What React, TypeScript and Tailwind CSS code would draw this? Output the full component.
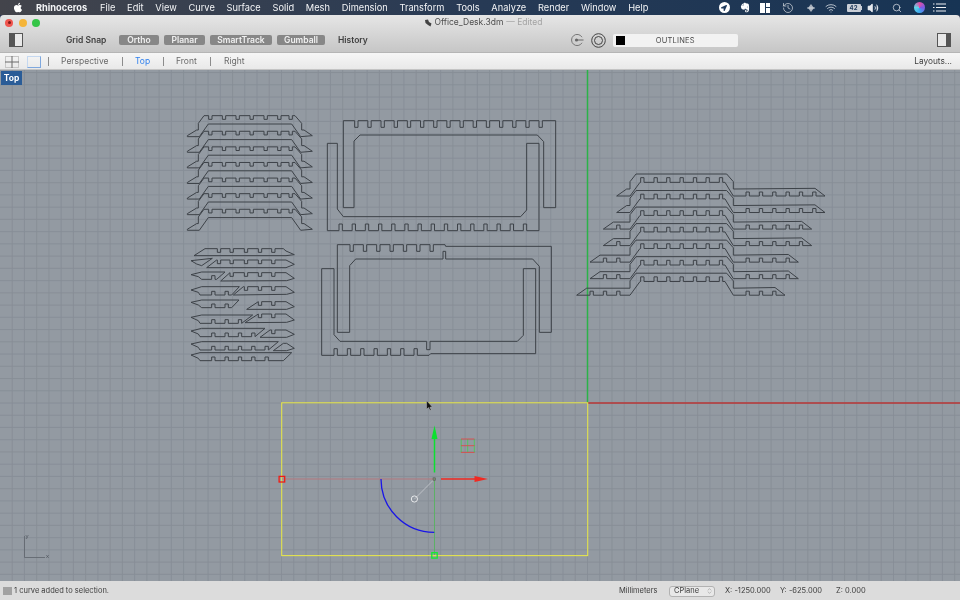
import React from "react";
import { FaApple, FaEvernote, FaLocationArrow } from "react-icons/fa";
import { Wifi, Volume2, Search, History, ChevronsUpDown } from "lucide-react";

type P = [number, number];
const pts = (list: P[], ox: number, oy: number) =>
  list.map(([x, y]) => `${(ox + x / 3).toFixed(2)},${(oy + y / 3).toFixed(2)}`).join(" ");

const edge = (xs: number[], y: number, w: number, d: number): P[] =>
  xs.flatMap((x) => [[x, y], [x, y + d], [x + w, y + d], [x + w, y]] as P[]);

const range = (start: number, step: number, n: number) =>
  Array.from({ length: n }, (_, i) => start + step * i);

const shift = (list: P[], dy: number): P[] => list.map(([x, y]) => [x, y + dy]);

// stack of ribs, upper left
const ribA: P[] = [
  [22, 92], [50, 75], [55, 75], [55, 55], [72, 32],
  ...edge([86, 127, 168, 210, 252, 293, 327], 32, 10, 11),
  [345, 32], [365, 55], [365, 75], [372, 75], [397, 92], [362, 95], [335, 57], [85, 57], [58, 95], [22, 95],
];

// stack of split ribs, lower left
const top = (a: number, b: number, y: number, xs: number[]) => edge(xs.filter((x) => x >= a && x <= b), y, 10, 11);
const bot = (a: number, b: number, y: number) =>
  edge([265, 225, 185, 145, 105].filter((x) => x <= b && x >= a), y, -10, -11);
const notchTop = [112, 150, 193, 235, 275];
const ribsB: P[][] = [
  [[42, 47], [75, 26], ...top(75, 300, 26, notchTop), [310, 26], [318, 33], [343, 44], [318, 47]],
  [[33, 62], [97, 55], [65, 77], [50, 72]],
  [[80, 83], [110, 60], ...top(110, 300, 60, notchTop), [318, 60], [343, 73], [318, 83]],
  [[33, 104], [65, 96], [135, 96], [110, 118], ...bot(100, 110, 118), [65, 118], [55, 110]],
  [[122, 123], [150, 98], ...top(150, 300, 98, notchTop), [318, 98], [343, 115], [320, 122]],
  [[33, 150], [65, 140], [178, 140], [155, 165], ...bot(100, 150, 165), [60, 165], [55, 157]],
  [[160, 165], [190, 140], ...top(190, 300, 140, notchTop), [318, 140], [343, 157], [320, 163]],
  [[33, 187], [65, 180], [177, 180], [155, 203], ...bot(100, 150, 203), [65, 203], [55, 195]],
  [[200, 208], [235, 185], ...top(235, 300, 185, notchTop), [318, 185], [343, 200], [320, 208]],
  [[33, 232], [65, 225], [218, 225], [185, 250], ...bot(100, 185, 250), [60, 250], [55, 242]],
  [[195, 248], [235, 222], ...top(235, 300, 222, notchTop), [318, 222], [343, 240], [320, 247]],
  [[33, 273], [65, 265], [255, 265], [225, 290], ...bot(100, 225, 290), [60, 290], [55, 282]],
  [[240, 292], [270, 270], ...top(270, 300, 270, notchTop), [318, 270], [343, 283], [320, 292]],
  [[33, 312], [65, 305], [295, 305], [265, 330], ...bot(100, 265, 330), [60, 330], [55, 322]],
  [[280, 332], [310, 310], [320, 310], [343, 325], [320, 332]],
  [[33, 345], [60, 338], [335, 338], [310, 362], ...bot(100, 265, 362), [60, 362], [55, 355]],
];

// long frames
const frameA1: P[] = [
  [70, 32], ...edge(range(104, 39.5, 15), 32, 10, 20), [707, 32], [707, 293], [671, 293], [671, 95], [652, 75],
  [120, 75], [102, 93], [102, 293], [70, 293],
];
const frameA2: P[] = [
  [22, 100], [52, 100], [52, 297], [70, 320], [602, 320], [620, 300], [620, 100], [657, 100], [657, 362],
  ...edge(range(620, -39.5, 15), 362, -10, -20), [22, 362],
];
const frameB1: P[] = [
  [67, 20], ...edge(range(105, 40, 7), 20, 10, 20), [390, 20], [392, 25], [709, 25], [709, 283], [673, 283],
  [673, 85], [653, 63], [392, 63], [392, 40], [384, 40], [384, 63], [122, 63], [104, 83], [104, 283], [67, 283],
];
const frameB2: P[] = [
  [20, 92], [57, 92], [57, 290], [75, 310], [335, 310], [335, 335], [345, 335], [345, 310], [607, 310], [625, 292],
  [625, 92], [662, 92], [662, 347], [347, 347], [342, 352], ...edge(range(307, -40, 7), 352, -10, -20), [20, 352],
];

// stack on the right of the Y axis
const ribC = (left: number, right: number): P[] => {
  const rightNotches = [738, 698, 658, 618, 578, 538].filter((x) => x < right - 15);
  const leftNotches = [150, 110, 70].filter((x) => x >= left + 40);
  return [
    [left, 93], [left + 30, 72], [180, 72], [180, 50], [198, 27], [470, 27], [490, 50], [490, 72],
    [right - 30, 70], [right, 93],
    ...edge(rightNotches, 93, -10, -12),
    [490, 93], [465, 52],
    ...edge([458, 418, 380, 340, 300, 262, 222], 52, -10, -14),
    [210, 52], [180, 93],
    ...edge(leftNotches, 93, -10, -12),
  ];
};
const ribCRows: { l: number; r: number }[] = [
  { l: 140, r: 765 }, { l: 140, r: 765 }, { l: 100, r: 725 }, { l: 100, r: 725 },
  { l: 60, r: 685 }, { l: 60, r: 685 }, { l: 20, r: 645 },
];

const GRID = 12.24;
const vLines = Array.from({ length: 80 }, (_, i) => 587.5 + (i - 48) * GRID).filter((x) => x > 0 && x < 960);
const hLines = Array.from({ length: 50 }, (_, i) => 403 + (i - 28) * GRID).filter((y) => y > 70 && y < 581);

function Canvas() {
  const ink = "#3d4248";
  const shapes: { p: P[]; ox: number; oy: number }[] = [
    ...range(0, 46.8, 7).map((dy) => ({ p: shift(ribA, dy), ox: 180, oy: 105 })),
    ...ribsB.map((p) => ({ p, ox: 180, oy: 240 })),
    { p: frameA1, ox: 320, oy: 110 },
    { p: frameA2, ox: 320, oy: 110 },
    { p: frameB1, ox: 315, oy: 238 },
    { p: frameB2, ox: 315, oy: 238 },
    ...ribCRows.map((r, i) => ({ p: shift(ribC(r.l, r.r), i * 49.6), ox: 570, oy: 165 })),
  ];
  return (
    <svg width="960" height="511" viewBox="0 70 960 511" className="block w-full h-full">
      <rect x="0" y="70" width="960" height="511" fill="#939aa2" />
      {vLines.map((x, i) => (
        <line key={i} x1={x} y1="70" x2={x} y2="581" stroke="#878d96" strokeWidth="0.9" />
      ))}
      {hLines.map((y, i) => (
        <line key={i} x1="0" y1={y} x2="960" y2={y} stroke="#878d96" strokeWidth="0.9" />
      ))}
      <line x1="587.5" y1="70" x2="587.5" y2="403" stroke="#2bb348" strokeWidth="1.5" />
      <line x1="587.5" y1="403" x2="960" y2="403" stroke="#b83636" strokeWidth="1.3" />
      {shapes.map((s, i) => (
        <polygon key={i} points={pts(s.p, s.ox, s.oy)} fill="none" stroke={ink} strokeWidth="1" strokeLinejoin="miter" />
      ))}
      {/* selection */}
      <rect x="281.7" y="402.8" width="306" height="152.8" fill="none" stroke="#e4e44e" strokeWidth="1.1" />
      <line x1="282" y1="479" x2="434.3" y2="479" stroke="#b5787e" strokeWidth="1" />
      <line x1="434.5" y1="479" x2="434.5" y2="555" stroke="#5cb066" strokeWidth="1" />
      <path d="M381 479 A53.3 53.3 0 0 0 434.3 532.3" fill="none" stroke="#1a16e6" strokeWidth="1.3" />
      <line x1="414.5" y1="499" x2="434" y2="479.5" stroke="#c6c9ce" strokeWidth="0.8" />
      <circle cx="414.4" cy="499" r="3.1" fill="none" stroke="#e6e8ea" strokeWidth="1" />
      <rect x="433" y="477.8" width="2.6" height="2.6" fill="#7d8672" stroke="#555" strokeWidth="0.5" />
      {/* gumball */}
      <line x1="434.5" y1="472.5" x2="434.5" y2="436" stroke="#0ce030" strokeWidth="1.5" />
      <polygon points="434.5,425.5 437.5,439 431.5,439" fill="#0ce030" />
      <line x1="441" y1="479" x2="476" y2="479" stroke="#f02a22" strokeWidth="1.5" />
      <polygon points="488,479 474.5,476 474.5,482" fill="#f02a22" />
      <rect x="279.1" y="476.4" width="5.6" height="5.6" fill="none" stroke="#f01c14" strokeWidth="1.3" />
      <rect x="431.8" y="552.7" width="5.4" height="5.4" fill="none" stroke="#12ec30" strokeWidth="1.3" />
      {/* scale widget */}
      <g strokeWidth="0.8" fill="none">
        <path d="M461.2 439V452.5M474.3 439V452.5M467.7 439V452.5" stroke="#3fd04d" />
        <path d="M461 439H474.5M461 445.7H474.5M461 452.4H474.5" stroke="#e6403c" />
      </g>
      {/* cursor */}
      <path d="M426.6 400.6V409.3L428.6 407.6L430 410.6L431.2 410L429.9 407.2L432.3 407Z" fill="#111" stroke="#b9bbbf" strokeWidth="0.5" />
      {/* world axes icon */}
      <path d="M24.5 536V557.5H45" fill="none" stroke="#5d636b" strokeWidth="0.8" />
      <text x="25.5" y="538" fontSize="6" fill="#4d535b" fontFamily="'Liberation Sans', sans-serif">y</text>
      <text x="46" y="558" fontSize="6" fill="#4d535b" fontFamily="'Liberation Sans', sans-serif">x</text>
    </svg>
  );
}

const menus = ["File", "Edit", "View", "Curve", "Surface", "Solid", "Mesh", "Dimension", "Transform", "Tools", "Analyze", "Render", "Window", "Help"];

function MenuBar() {
  return (
    <div className="flex items-center h-[15px] shrink-0 bg-gradient-to-r from-[#43444b] via-[#273a55] to-[#173454] text-[#f4f5f7] text-[9.25px] leading-none">
      <FaApple className="ml-[13px] w-[10px] h-[11px] text-white" />
      <span className="ml-[13px] font-bold w-[64px]">Rhinoceros</span>
      <div className="flex items-center gap-[11.75px]">
        {menus.map((m) => (
          <span key={m}>{m}</span>
        ))}
      </div>
      <div className="ml-auto mr-[6px] flex items-center text-white">
        <span className="w-[20px] flex justify-center">
          <span className="w-[11px] h-[11px] rounded-full bg-white flex items-center justify-center">
            <FaLocationArrow className="w-[6px] h-[6px] text-[#1f3a5c]" />
          </span>
        </span>
        <span className="w-[22px] flex justify-center"><FaEvernote className="w-[10px] h-[11px]" /></span>
        <span className="w-[18px] flex justify-center">
          <span className="grid grid-cols-2 gap-[1px] w-[10px] h-[10px]">
            <span className="bg-white row-span-2" />
            <span className="bg-white" />
            <span className="bg-white" />
          </span>
        </span>
        <span className="w-[28px] flex justify-center"><History className="w-[12px] h-[12px] text-[#d9dde3]" strokeWidth={1.4} /></span>
        <span className="w-[18px] flex justify-center">
          <svg width="8" height="10" viewBox="0 0 8 10">
            <path d="M4 1L7 5L4 9L1 5Z" fill="#aab2bd" />
            <path d="M0 5H8" stroke="#e0e3e8" strokeWidth=".8" />
          </svg>
        </span>
        <span className="w-[22px] flex justify-center"><Wifi className="w-[14px] h-[12px] text-[#e6e9ee]" strokeWidth={1.5} /></span>
        <span className="w-[24px] flex justify-center items-center">
          <span className="w-[14px] h-[8px] bg-[#c9ced6] rounded-[1px] text-[6px] leading-[8px] text-center text-[#1f3a5c] font-bold">42</span>
          <span className="w-[1px] h-[4px] bg-[#c9ced6]" />
        </span>
        <span className="w-[14px] flex justify-center"><Volume2 className="w-[12px] h-[12px] text-[#e6e9ee] shrink-0" fill="currentColor" strokeWidth={1.3} /></span>
        <span className="w-[34px] flex justify-center"><Search className="w-[10px] h-[10px] text-[#e6e9ee]" strokeWidth={1.7} /></span>
        <span className="w-[10px] flex justify-center"><span className="w-[11px] h-[11px] shrink-0 rounded-full bg-[conic-gradient(#e24fa5,#7a5be6,#3ba8ef,#63d6e8,#e24fa5)]" /></span>
        <span className="w-[30px] flex justify-center">
          <svg width="13" height="9" viewBox="0 0 13 9">
            <path d="M0 1H1.5M0 4.5H1.5M0 8H1.5M3 1H13M3 4.5H13M3 8H13" stroke="#f0f2f5" strokeWidth="1.2" />
          </svg>
        </span>
      </div>
    </div>
  );
}

const Pill = ({ w, t }: { w: string; t: string }) => (
  <span className={`${w} h-[10px] rounded-[2px] bg-[#878787] text-[#f1f1f1] text-[8.5px] leading-[10px] font-semibold text-center`}>{t}</span>
);

function TitleBar() {
  return (
    <div className="h-[38px] shrink-0 bg-gradient-to-b from-[#e6e6e6] to-[#c6c6c6] border-b border-[#b5b5b5] rounded-t-[4px] flex flex-col">
      <div className="h-[15px] flex items-center shrink-0">
        <div className="flex items-center gap-[5.5px] ml-[5px]">
          <span className="w-[8px] h-[8px] rounded-full bg-[#f0564f] flex items-center justify-center">
            <span className="w-[3px] h-[3px] rounded-full bg-[#7f1a16]" />
          </span>
          <span className="w-[8px] h-[8px] rounded-full bg-[#f5b53a]" />
          <span className="w-[8px] h-[8px] rounded-full bg-[#35c548]" />
        </div>
        <div className="flex-1 flex items-center justify-center text-[8.5px] mr-[34px]">
          <svg width="8" height="8" viewBox="0 0 8 8" className="mr-[3px]">
            <path d="M1 1L4 .5L5 3L7.5 4.5L6.5 7.5L4 6L1.5 4Z" fill="#444" />
          </svg>
          <span className="text-[#4e4e4e]">Office_Desk.3dm</span>
          <span className="text-[#a3a3a3] ml-[3px]">— Edited</span>
        </div>
      </div>
      <div className="flex-1 flex items-center pb-[2px] text-[8.5px]">
        <svg width="14" height="14" viewBox="0 0 14 14" className="ml-[9px]">
          <rect x=".5" y=".5" width="13" height="13" fill="#e8e8e8" stroke="#555" />
          <rect x="1" y="1" width="5" height="12" fill="#555" />
        </svg>
        <span className="ml-[43px] w-[53px] font-semibold text-[#3f3f3f]">Grid Snap</span>
        <div className="flex items-center gap-[5px]">
          <Pill w="w-[40px]" t="Ortho" />
          <Pill w="w-[41px]" t="Planar" />
          <Pill w="w-[62px]" t="SmartTrack" />
          <Pill w="w-[48px]" t="Gumball" />
        </div>
        <span className="ml-[13px] font-semibold text-[#3f3f3f]">History</span>
        <svg width="14" height="14" viewBox="0 0 14 14" className="ml-[202px]">
          <path d="M12 4.2A5.6 5.6 0 1 0 12 9.8" fill="none" stroke="#777" strokeWidth="1" />
          <path d="M7 7H13.5" stroke="#666" strokeWidth="1" />
          <circle cx="6.5" cy="7" r="1.6" fill="#666" />
        </svg>
        <svg width="15" height="15" viewBox="0 0 15 15" className="ml-[7px]">
          <circle cx="7.5" cy="7.5" r="6.8" fill="none" stroke="#444" strokeWidth="1" />
          <circle cx="7.5" cy="7.5" r="4" fill="none" stroke="#444" strokeWidth="1" />
        </svg>
        <div className="ml-[7px] w-[125px] h-[13px] bg-[#f2f2f2] rounded-[2px] flex items-center pl-[3px]">
          <span className="w-[9px] h-[9px] bg-black shrink-0" />
          <span className="flex-1 text-center text-[7.5px] tracking-[0.2px] text-[#4a4a4a] pr-[12px] pt-[1px]">OUTLINES</span>
        </div>
        <svg width="14" height="14" viewBox="0 0 14 14" className="ml-auto mr-[9px]">
          <rect x=".5" y=".5" width="13" height="13" fill="#e8e8e8" stroke="#555" />
          <rect x="9" y="1" width="4" height="12" fill="#555" />
        </svg>
      </div>
    </div>
  );
}

const Sep = () => <span className="block w-px h-[9px] bg-[#8c8c8c]" />;

function TabBar() {
  return (
    <div className="h-[17px] shrink-0 bg-gradient-to-b from-[#f6f6f6] to-[#e9e9e9] border-b border-[#c4c4c4] flex items-center pt-[1px] text-[8.5px] text-[#6a6a6a]">
      <svg width="14" height="12" viewBox="0 0 14 12" className="ml-[5px]">
        <rect x=".5" y=".5" width="13" height="11" fill="none" stroke="#c6c6c6" />
        <path d="M7 0V12M0 6H14" stroke="#6a6a6a" strokeWidth="1" />
      </svg>
      <span className="ml-[8px] w-[14px] h-[12px] border border-[#c5d8f0] border-b-[#7fa8de] border-r-[#7fa8de]" />
      <span className="ml-[7px]"><Sep /></span>
      <span className="ml-[12px] w-[61px] block">Perspective</span>
      <Sep />
      <span className="ml-[12px] w-[28px] text-[#2f80ee] block">Top</span>
      <Sep />
      <span className="ml-[12px] w-[34px] block">Front</span>
      <Sep />
      <span className="ml-[13px]">Right</span>
      <span className="ml-auto mr-[8px] text-[#3f3f3f] text-[8.3px]">Layouts...</span>
    </div>
  );
}

function StatusBar() {
  return (
    <div className="h-[19px] shrink-0 bg-[#dcdcdc] flex items-center pt-[1px] text-[7.5px] text-[#3c3c3c]">
      <span className="ml-[3px] w-[9px] h-[8px] bg-[#a2a2a2]" />
      <span className="ml-[2px]">1 curve added to selection.</span>
      <span className="ml-auto w-[50px]">Millimeters</span>
      <span className="w-[46px] h-[11px] border border-[#b2b2b2] rounded-[3px] bg-[#e8e8e8] flex items-center pl-[4px] leading-none">
        CPlane
        <ChevronsUpDown className="ml-auto mr-[1px] w-[7px] h-[8px] text-[#777]" strokeWidth={1.5} />
      </span>
      <span className="ml-[10px] w-[55px]">X: -1250.000</span>
      <span className="w-[56px]">Y: -625.000</span>
      <span className="w-[124px]">Z: 0.000</span>
    </div>
  );
}

export default function App() {
  return (
    <div className="w-[960px] h-[600px] overflow-hidden flex flex-col bg-[#2a3550] blur-[0.35px] font-['Inter','Liberation_Sans',sans-serif]">
      <MenuBar />
      <TitleBar />
      <TabBar />
      <div className="relative flex-1 min-h-0">
        <Canvas />
        <span className="absolute left-[1px] top-[1px] w-[21px] h-[14px] bg-[#2a5c97] text-white text-[8.5px] leading-[14px] font-bold text-center">Top</span>
      </div>
      <StatusBar />
    </div>
  );
}
